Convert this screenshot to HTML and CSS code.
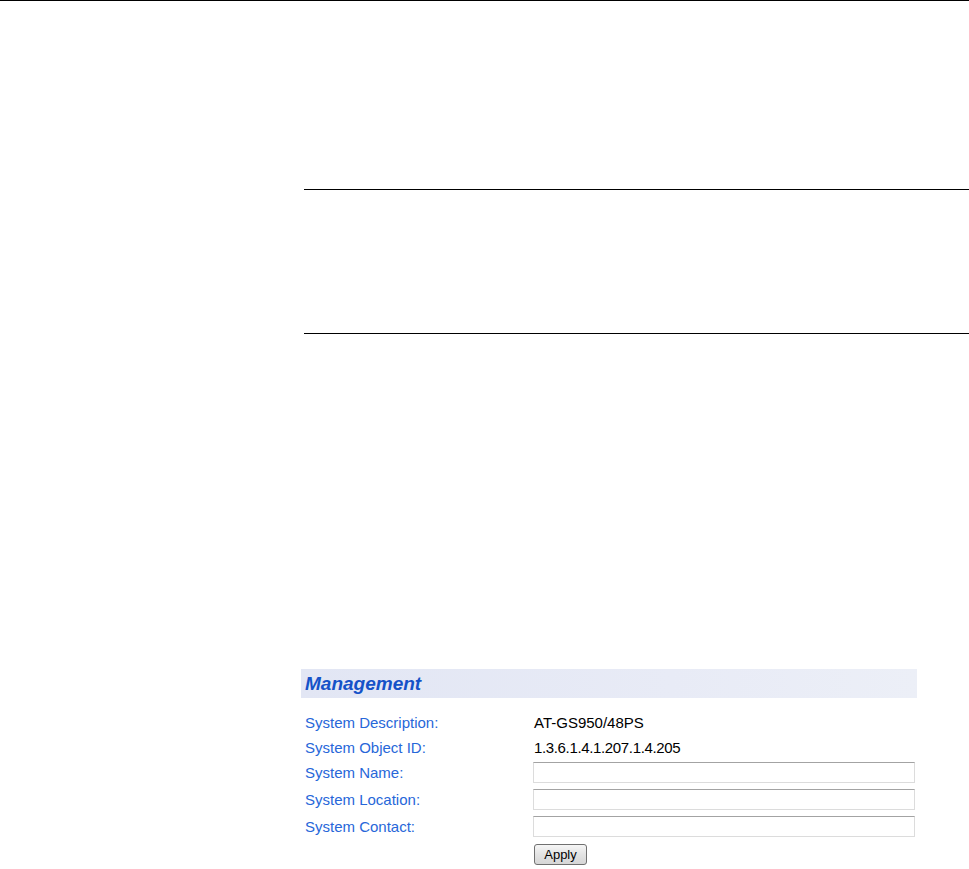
FILE: index.html
```html
<!DOCTYPE html>
<html>
<head>
<meta charset="utf-8">
<link rel="stylesheet" href="styles.css">
</head>
<body>
<div class="topline"></div>
<div class="content">
  <div class="rule rule-first"></div>
  <div class="rule rule-second"></div>
  <div class="panel">
    <div class="panel-head">Management</div>
    <div class="form">
      <div class="row text-row">
        <span class="label">System Description:</span>
        <span class="value">AT-GS950/48PS</span>
      </div>
      <div class="row text-row">
        <span class="label">System Object ID:</span>
        <span class="value oid">1.3.6.1.4.1.207.1.4.205</span>
      </div>
      <div class="row input-row">
        <span class="label">System Name:</span>
        <input class="field" type="text">
      </div>
      <div class="row input-row">
        <span class="label">System Location:</span>
        <input class="field" type="text">
      </div>
      <div class="row input-row">
        <span class="label">System Contact:</span>
        <input class="field" type="text">
      </div>
      <div class="row button-row">
        <span class="label"></span>
        <button class="apply" type="button">Apply</button>
      </div>
    </div>
  </div>
</div>
</body>
</html>
```

FILE: styles.css
```css
html, body {
  margin: 0;
  padding: 0;
  background: #ffffff;
}

body {
  font-family: "Liberation Sans", Arial, sans-serif;
  width: 969px;
  height: 869px;
  overflow: hidden;
}

.topline {
  height: 1px;
  background: #000000;
}

.content {
  padding-left: 301px;
}

.rule {
  height: 1px;
  background: #000000;
  margin-left: 3px;
}

.rule-first {
  margin-top: 188px;
}

.rule-second {
  margin-top: 143px;
}

.panel {
  margin-top: 335px;
  width: 616px;
}

.panel-head {
  height: 29px;
  line-height: 29px;
  padding-left: 4px;
  background: linear-gradient(to right, #e2e6f4, #e8ebf6 60%, #eceff7);
  color: #1552c8;
  font-size: 19px;
  font-weight: bold;
  font-style: italic;
}

.form {
  padding-top: 12px;
  padding-left: 4px;
}

.row {
  display: grid;
  grid-template-columns: 229px 382px;
  align-items: center;
}

.text-row {
  height: 25px;
}

.input-row {
  padding-top: 2px;
  padding-bottom: 4px;
}

.button-row {
  padding-top: 3px;
}

.label {
  color: #2767d9;
  font-size: 15px;
  line-height: 17px;
}

.value {
  color: #000000;
  font-size: 15px;
  line-height: 17px;
}

.oid {
  letter-spacing: -0.35px;
}

.field {
  box-sizing: border-box;
  width: 382px;
  height: 21px;
  margin: 0 0 0 -1px;
  padding: 0 3px;
  border: 1px solid #dcdcdc;
  border-top-color: #a3a3a3;
  background: #ffffff;
  font-family: "Liberation Sans", Arial, sans-serif;
  font-size: 13px;
}

.apply {
  box-sizing: border-box;
  width: 53px;
  height: 21px;
  margin: 0;
  padding: 0;
  border: 1px solid #707070;
  border-radius: 3px;
  background: linear-gradient(#f6f6f6, #e3e3e3 50%, #d6d6d6);
  color: #000000;
  font-family: "Liberation Sans", Arial, sans-serif;
  font-size: 13px;
  line-height: 19px;
}
```
